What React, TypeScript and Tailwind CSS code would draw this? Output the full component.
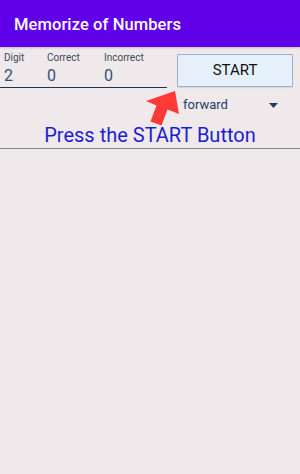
import React from "react";

export default function App() {
  return (
    <div className="w-[300px] h-[474px] bg-[#efe9ec] relative overflow-hidden" style={{ fontFamily: "Roboto, 'Noto Sans', sans-serif" }}>
      <div className="h-[47px] bg-[#5f00e8] flex items-center pl-[14px] pt-[3px] shadow-[0_1px_2px_rgba(0,0,0,0.2)]">
        <span className="text-white text-[16.5px] font-medium tracking-[0.1px]">Memorize of Numbers</span>
      </div>
      <div className="flex items-start">
        <div className="w-[167px] pt-[5px] border-b border-[#1d3550] h-[41px]">
          <div className="flex">
            <div className="w-[47px] pl-[4px]">
              <div className="text-[10px] text-[#3e4a57] leading-[12px]">Digit</div>
              <div className="text-[16px] text-[#2f5274] leading-[18px] mt-[3px]">2</div>
            </div>
            <div className="w-[57px]">
              <div className="text-[10px] text-[#3e4a57] leading-[12px]">Correct</div>
              <div className="text-[16px] text-[#2f5274] leading-[18px] mt-[3px]">0</div>
            </div>
            <div>
              <div className="text-[10px] text-[#3e4a57] leading-[12px]">Incorrect</div>
              <div className="text-[16px] text-[#2f5274] leading-[18px] mt-[3px]">0</div>
            </div>
          </div>
        </div>
        <div className="ml-[10px] mt-[7px] w-[116px] h-[33px] border border-[#9fb3c4] bg-[#e6f0fa] rounded-[1px] flex items-center justify-center shadow-[0_1px_1px_rgba(0,0,0,0.1)]">
          <span className="text-[15px] text-[#111]">START</span>
        </div>
      </div>
      <div className="flex items-center h-[30px] pt-[4px] pl-[183px] pr-[22px]">
        <span className="text-[13px] text-[#1f3e66] flex-1">forward</span>
        <svg width="9" height="5" viewBox="0 0 9 5"><path d="M0 0 L9 0 L4.5 5 Z" fill="#1f3e66" /></svg>
      </div>
      <div className="h-[31px] pt-[3px] flex items-center justify-center border-b border-[#7a8aa0]">
        <span className="text-[20px] text-[#1d1dd0] leading-[24px]">Press the START Button</span>
      </div>
      <svg className="absolute left-0 top-0 pointer-events-none" width="300" height="474">
        <polygon points="175,91 179,114 167.5,109.5 161.5,125.5 150.5,121.5 156.5,105.5 146,101" fill="#ff3838" />
      </svg>
    </div>
  );
}
